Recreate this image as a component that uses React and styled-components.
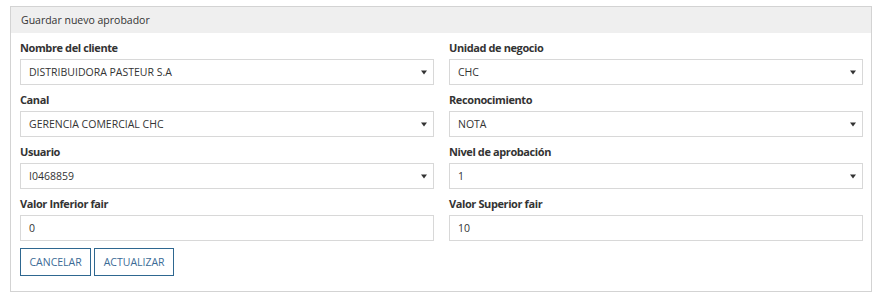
import React from "react";
import styled, { createGlobalStyle } from "styled-components";

const Global = createGlobalStyle`
  html, body { margin: 0; padding: 0; background: #fff; }
  body { font-family: "Open Sans", "Noto Sans", Arial, sans-serif; color: #333; }
  * { box-sizing: border-box; }
`;

const Panel = styled.section`
  margin: 6px 0 0 10px;
  width: 862px;
  border: 1px solid #d3d3d3;
  background: #fff;
`;

const Header = styled.div`
  height: 26px;
  line-height: 26px;
  padding: 0 10px;
  background: #efefef;
  font-size: 10.5px;
  color: #333;
`;

const Body = styled.div`
  padding: 0 8px 15px 9px;
`;

const Grid = styled.div`
  display: grid;
  grid-template-columns: 1fr 1fr;
  column-gap: 15px;
`;

const Field = styled.div`
  display: flex;
  flex-direction: column;
`;

const Label = styled.label`
  margin-top: 7px;
  height: 19px;
  line-height: 16px;
  font-size: 11px;
  font-weight: 700;
  letter-spacing: -0.4px;
  color: #333;
`;

const Box = styled.div`
  position: relative;
  height: 26px;
  border: 1px solid #d8d8d8;
  padding: 0 24px 0 8px;
  display: flex;
  align-items: center;
  font-size: 10.5px;
  color: #333;
  background: #fff;
`;

const Caret = styled.span`
  position: absolute;
  right: 6px;
  top: 50%;
  transform: translateY(-40%);
  width: 0;
  height: 0;
  border-left: 3px solid transparent;
  border-right: 3px solid transparent;
  border-top: 4px solid #333;
`;

const Actions = styled.div`
  display: flex;
  gap: 3px;
  margin-top: 7px;
`;

const Button = styled.button`
  height: 28px;
  padding: 0 8.5px;
  border: 1px solid #2e6790;
  background: #fff;
  color: #3b6b96;
  font-family: inherit;
  font-size: 10.5px;
  text-transform: uppercase;
  cursor: pointer;
`;

const fields = [
  { label: "Nombre del cliente", value: "DISTRIBUIDORA PASTEUR S.A", select: true },
  { label: "Unidad de negocio", value: "CHC", select: true },
  { label: "Canal", value: "GERENCIA COMERCIAL CHC", select: true },
  { label: "Reconocimiento", value: "NOTA", select: true },
  { label: "Usuario", value: "I0468859", select: true },
  { label: "Nivel de aprobación", value: "1", select: true },
  { label: "Valor Inferior fair", value: "0", select: false },
  { label: "Valor Superior fair", value: "10", select: false },
];

export default function App() {
  return (
    <>
      <Global />
      <Panel>
        <Header>Guardar nuevo aprobador</Header>
        <Body>
          <Grid>
            {fields.map((f) => (
              <Field key={f.label}>
                <Label>{f.label}</Label>
                <Box>
                  {f.value}
                  {f.select && <Caret />}
                </Box>
              </Field>
            ))}
          </Grid>
          <Actions>
            <Button>Cancelar</Button>
            <Button>Actualizar</Button>
          </Actions>
        </Body>
      </Panel>
    </>
  );
}
